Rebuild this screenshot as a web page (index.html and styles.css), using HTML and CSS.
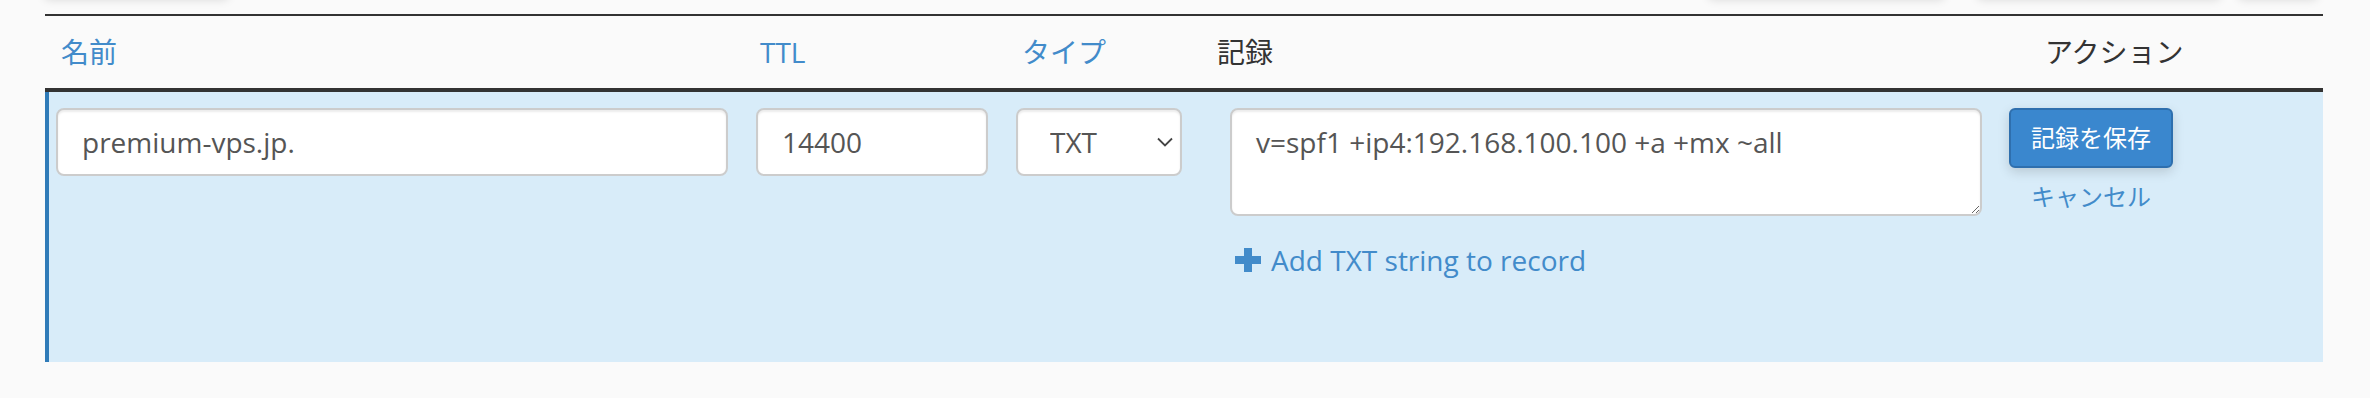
FILE: index.html
```html
<!DOCTYPE html>
<html lang="ja">
<head>
  <meta charset="UTF-8" />
  <meta name="viewport" content="width=device-width, initial-scale=1.0"/>
  <title>Zone Editor</title>
  <link rel="stylesheet" href="styles.css">
</head>
<body>
  <div class="toolbar">
    <span class="tool tool-search"></span>
    <span class="tool tool-a"></span>
    <span class="tool tool-b"></span>
    <span class="tool tool-c"></span>
  </div>

  <div class="zone">
    <div class="zone-head">
      <div class="th link">名前</div>
      <div class="th link">TTL</div>
      <div class="th link">タイプ</div>
      <div class="th">記録</div>
      <div class="th">アクション</div>
    </div>

    <form class="zone-edit">
      <input class="field field-name" type="text" value="premium-vps.jp.">
      <input class="field field-ttl" type="text" value="14400">
      <div class="select-wrap">
        <select class="field field-type">
          <option>TXT</option>
        </select>
        <svg class="chevron" width="16" height="10" viewBox="0 0 16 10">
          <path d="M1 1.5 L8 8.5 L15 1.5" fill="none" stroke="#444" stroke-width="1.8"/>
        </svg>
      </div>
      <div class="record">
        <textarea class="field field-record" rows="2">v=spf1 +ip4:192.168.100.100 +a +mx ~all</textarea>
        <a class="add-string" href="#">
          <svg class="plus" width="26" height="24" viewBox="0 0 26 24">
            <rect x="9" y="0" width="8" height="24" fill="#428bca"/>
            <rect x="0" y="8" width="26" height="8" fill="#428bca"/>
          </svg>
          Add TXT string to record
        </a>
      </div>
      <div class="actions">
        <button class="btn-save" type="button">記録を保存</button>
        <a class="cancel" href="#">キャンセル</a>
      </div>
    </form>
  </div>
</body>
</html>
```

FILE: styles.css
```css
:root {
  --link: #428bca;
  --text: #333;
  --row-bg: #d8ecf9;
  --row-edge: #2f7bb8;
}

body {
  margin: 0;
  background: #fafafa;
  color: var(--text);
  font-family: "Open Sans", "Noto Sans CJK JP", sans-serif;
  font-size: 28px;
  line-height: 40px;
}

a {
  color: var(--link);
  text-decoration: none;
}

/* bottoms of the controls above, only their shadow shows */
.toolbar {
  display: flex;
  height: 14px;
  padding-left: 43px;
}

.tool {
  height: 40px;
  margin-top: -42px;
  background: #fff;
  border-radius: 8px;
  box-shadow: 0 2px 10px rgba(0,0,0,0.13);
}

.tool-search { width: 187px; }
.tool-a { width: 239px; margin-left: 1477px; }
.tool-b { width: 246px; margin-left: 30px; }
.tool-c { width: 82px; margin-left: 15px; }

.zone {
  margin-left: 45px;
  width: 2278px;
}

.zone-head {
  display: grid;
  grid-template-columns: 699px 262px 195px 828px 1fr;
  border-top: 2px solid #333;
  border-bottom: 4px solid #333;
}

.th {
  padding: 16px;
}

.th.link {
  color: var(--link);
}

.zone-edit {
  display: flex;
  align-items: flex-start;
  box-sizing: border-box;
  height: 270px;
  margin: 0;
  padding: 16px 0 0 7px;
  background: var(--row-bg);
  border-left: 4px solid var(--row-edge);
}

.field {
  box-sizing: border-box;
  margin: 0;
  padding: 12px 24px;
  font-family: inherit;
  font-size: 28px;
  line-height: 40px;
  color: #555;
  background: #fff;
  border: 2px solid #ccc;
  border-radius: 8px;
  box-shadow: inset 0 2px 2px rgba(0,0,0,0.075);
}

.field-name {
  width: 672px;
  height: 68px;
}

.field-ttl {
  width: 232px;
  height: 68px;
  margin-left: 28px;
}

.select-wrap {
  position: relative;
  margin-left: 28px;
}

.field-type {
  width: 166px;
  height: 68px;
  padding-left: 32px;
  appearance: none;
  -webkit-appearance: none;
}

.chevron {
  position: absolute;
  left: 141px;
  top: 29px;
  pointer-events: none;
}

.record {
  width: 752px;
  margin-left: 48px;
}

.field-record {
  display: block;
  width: 752px;
  height: 108px;
  resize: vertical;
}

.add-string {
  display: flex;
  align-items: center;
  gap: 10px;
  margin: 24px 0 0 5px;
}

.actions {
  display: flex;
  flex-direction: column;
  align-items: center;
  margin-left: 27px;
}

.btn-save {
  padding: 12px 20px;
  font-family: inherit;
  font-size: 24px;
  line-height: 32px;
  color: #fff;
  background: #3a87ce;
  border: 2px solid #2e6fae;
  border-radius: 6px;
  box-shadow: 0 4px 12px rgba(0,0,0,0.15);
  cursor: pointer;
}

.cancel {
  margin-top: 12px;
  font-size: 24px;
  line-height: 34px;
}
```
